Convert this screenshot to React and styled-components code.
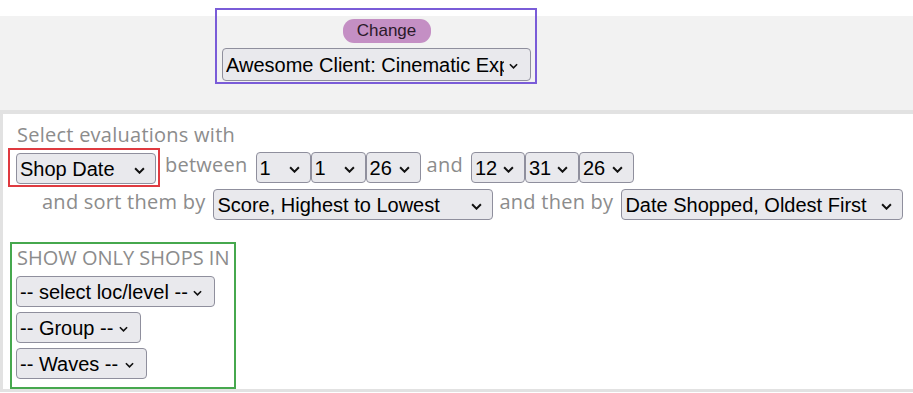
import React from 'react'
import styled, { createGlobalStyle } from 'styled-components'

const GlobalStyle = createGlobalStyle`
  html, body {
    margin: 0;
    background: #fff;
    font-family: "Open Sans", Lato, sans-serif;
  }
`

const Header = styled.header`
  box-sizing: border-box;
  height: 110px;
  padding: 8px 0 0 215px;
  background: linear-gradient(#fff 0 16px, #f2f2f2 16px);
`

const ClientBox = styled.div`
  box-sizing: border-box;
  width: 322px;
  display: flex;
  flex-direction: column;
  gap: 5px;
  padding: 9px 4px 1px 5px;
  border: 2px solid #7a5cd8;
`

const ChangeButton = styled.button`
  align-self: center;
  margin-left: 20px;
  width: 88px;
  height: 24px;
  padding: 0;
  border: none;
  border-radius: 11px;
  background: #c48fc4;
  color: #2a1a2a;
  font: 17px "Liberation Sans", Arial, sans-serif;
  cursor: pointer;
`

const Panel = styled.section`
  border-style: solid;
  border-color: #e2e2e2;
  border-width: 4px 0 3px 3px;
  padding: 9px 0 0 5px;
  color: #8c8c8c;
  letter-spacing: 0.25px;
`

const Intro = styled.div`
  font-size: 20px;
  line-height: 24px;
  padding-left: 9px;
`

const Row = styled.div`
  display: flex;
  align-items: center;
  margin-top: ${({ $top }) => $top || 0}px;
  padding-left: ${({ $indent }) => $indent || 0}px;
`

const Label = styled.span`
  font-size: 20px;
  line-height: 24px;
  margin: 0 8px 6px ${({ $left }) => ($left === undefined ? 6 : $left)}px;
  white-space: nowrap;
`

const FieldBox = styled.div`
  display: inline-flex;
  padding: 3px 2px 1px 6px;
  border: 2px solid #df3a40;
`

const FilterBox = styled.div`
  display: inline-flex;
  flex-direction: column;
  align-items: flex-start;
  gap: 5px;
  margin: 22px 0 0 2px;
  padding: 2px 5px 8px 4px;
  border: 2px solid #46a84e;
`

const FilterTitle = styled.div`
  font-size: 20px;
  line-height: 24px;
  margin: 0 0 1px 1px;
  letter-spacing: 0;
`

const SelectWrap = styled.span`
  position: relative;
  display: inline-flex;
  width: ${({ $w }) => $w}px;
  height: ${({ $h }) => $h || 31}px;
  letter-spacing: 0;
`

const NativeSelect = styled.select`
  appearance: none;
  box-sizing: border-box;
  width: 100%;
  height: 100%;
  margin: 0;
  padding: 0 26px 0 3px;
  border: 1px solid #8f8f9d;
  border-radius: 4px;
  background: #e9e9ed;
  color: #000;
  font: 20px "Liberation Sans", Arial, sans-serif;
`

const Chevron = styled.svg`
  position: absolute;
  right: ${({ $small }) => ($small ? 13 : 11)}px;
  top: 50%;
  margin-top: -2px;
  pointer-events: none;
`

const Select = ({ width, height, small, options }) => (
  <SelectWrap $w={width} $h={height}>
    <NativeSelect defaultValue={options[0]}>
      {options.map((o) => (
        <option key={o}>{o}</option>
      ))}
    </NativeSelect>
    <Chevron
      $small={small}
      width={small ? 9 : 11}
      height={small ? 6 : 7}
      viewBox="0 0 10 6"
    >
      <path d="M1 1l4 4 4-4" fill="none" stroke="#111" strokeWidth="1.8" />
    </Chevron>
  </SelectWrap>
)

export default function App() {
  return (
    <>
      <GlobalStyle />
      <Header>
        <ClientBox>
          <ChangeButton>Change</ChangeButton>
          <Select
            width={309}
            height={33}
            small
            options={['Awesome Client: Cinematic Experiences Group']}
          />
        </ClientBox>
      </Header>
      <Panel>
        <Intro>Select evaluations with</Intro>
        <Row $top={1}>
          <FieldBox>
            <Select width={140} options={['Shop Date', 'Entry Date']} />
          </FieldBox>
          <Label $left={5}>between</Label>
          <Select width={55} options={['1', '2', '3']} />
          <Select width={55} options={['1', '2', '3']} />
          <Select width={55} options={['26', '25', '24']} />
          <Label>and</Label>
          <Select width={54} options={['12', '11', '10']} />
          <Select width={54} options={['31', '30', '29']} />
          <Select width={55} options={['26', '25', '24']} />
        </Row>
        <Row $top={2} $indent={34}>
          <Label $left={0}>and sort them by</Label>
          <Select width={280} options={['Score, Highest to Lowest', 'Score, Lowest to Highest']} />
          <Label>and then by</Label>
          <Select width={282} options={['Date Shopped, Oldest First', 'Date Shopped, Newest First']} />
        </Row>
        <FilterBox>
          <FilterTitle>SHOW ONLY SHOPS IN</FilterTitle>
          <Select width={199} small options={['-- select loc/level --']} />
          <Select width={125} small options={['-- Group --']} />
          <Select width={131} small options={['-- Waves --']} />
        </FilterBox>
      </Panel>
    </>
  )
}
